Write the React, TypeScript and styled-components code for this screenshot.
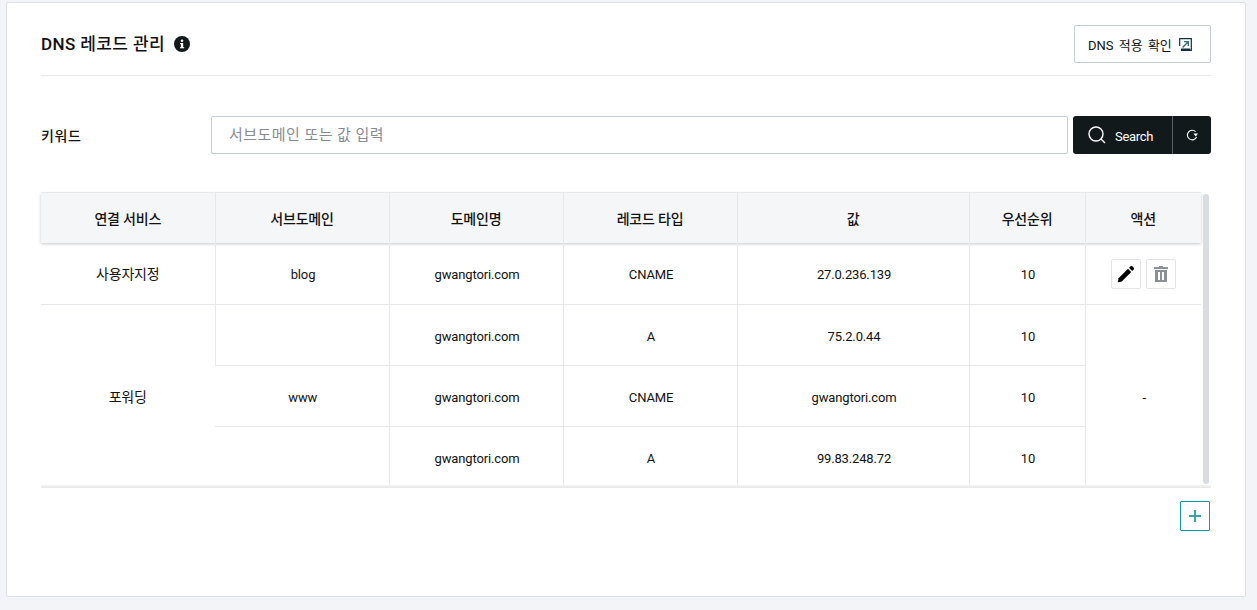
import React from "react";
import styled, { createGlobalStyle } from "styled-components";

const Global = createGlobalStyle`
  html, body { margin: 0; padding: 0; height: 100%; background: #f3f4f8; }
  body { font-family: Roboto, "Noto Sans CJK KR", sans-serif; color: #111; }
  * { box-sizing: border-box; }
`;

const Page = styled.div`
  width: 1257px;
  height: 610px;
  padding: 2px 11px 13px 6px;
`;

const Card = styled.section`
  height: 595px;
  width: 1240px;
  background: #fff;
  border: 1px solid #dde1e6;
  border-radius: 2px;
  padding: 22px 34px 0 34px;
`;

const Header = styled.header`
  height: 51px;
  border-bottom: 1px solid #e6e8eb;
  display: flex;
  justify-content: space-between;
  align-items: flex-start;
`;

const TitleWrap = styled.div`
  display: flex;
  align-items: center;
  gap: 9px;
  height: 38px;
`;

const Title = styled.h1`
  margin: 0;
  font-size: 17px;
  font-weight: 500;
  letter-spacing: 0.4px;
  color: #111;
  line-height: 38px;
`;

const OutlineButton = styled.button`
  width: 137px;
  height: 38px;
  background: #fff;
  border: 1px solid #c4ccd6;
  border-radius: 2px;
  display: flex;
  align-items: center;
  gap: 7px;
  font: inherit;
  font-size: 13px;
  word-spacing: 2px;
  color: #111;
  padding: 0 0 0 13px;
`;

const SearchRow = styled.form`
  margin-top: 40px;
  display: flex;
  align-items: center;
  height: 38px;
`;

const Label = styled.label`
  width: 170px;
  font-size: 14px;
  font-weight: 500;
  letter-spacing: 0.6px;
  color: #111;
`;

const Input = styled.input`
  width: 857px;
  height: 38px;
  border: 1px solid #c4ccd6;
  border-radius: 2px;
  padding: 0 17px;
  font: inherit;
  font-size: 15px;
  letter-spacing: 0.45px;
  &::placeholder { color: #868b92; opacity: 1; }
`;

const SearchGroup = styled.div`
  margin-left: 5px;
  width: 138px;
  height: 38px;
  display: flex;
  background: #12191b;
  border-radius: 3px;
`;

const SearchButton = styled.button`
  width: 100px;
  border: 0;
  border-right: 1px solid #5a6066;
  background: transparent;
  color: #fff;
  display: flex;
  align-items: center;
  gap: 9px;
  padding: 0 0 0 15px;
  font: inherit;
  font-size: 13px;
  letter-spacing: -0.3px;
`;

const SearchLabel = styled.span`
  padding-top: 2px;
`;

const ResetButton = styled.button`
  flex: 1;
  border: 0;
  background: transparent;
  color: #fff;
  display: flex;
  align-items: center;
  justify-content: center;
  padding: 0;
`;

const TableWrap = styled.div`
  position: relative;
  margin-top: 38px;
  height: 296px;
  width: 1170px;
`;

const Table = styled.table`
  border-collapse: collapse;
  table-layout: fixed;
  width: 1160px;
  font-size: 13px;
  color: #111;
`;

const HeadRow = styled.tr`
  height: 50px;
  background: #f5f6f8;
  box-shadow: 0 1px 3px rgba(0, 0, 0, 0.22);
`;

const Th = styled.th`
  font-weight: 500;
  font-size: 14px;
  letter-spacing: -0.2px;
  border-top: 1px solid #e6e8eb;
  border-left: 1px solid #e6e8eb;
  padding: 0;
  &:first-child { border-left: 0; }
`;

const Row = styled.tr<{ $first?: boolean }>`
  height: ${(p) => (p.$first ? "62px" : "61px")};
`;

const Td = styled.td<{ $korean?: boolean }>`
  text-align: center;
  padding: ${(p) => (p.$korean ? "0" : "2px 0 0 2px")};
  font-size: ${(p) => (p.$korean ? "14px" : "13px")};
  letter-spacing: -0.15px;
  border-left: 1px solid #e6e8eb;
  border-bottom: 1px solid #e6e8eb;
  &:first-child { border-left: 0; }
`;

const BottomEdge = styled.div`
  position: absolute;
  left: 0;
  top: 293px;
  width: 1170px;
  height: 3px;
  background: linear-gradient(#f6f6f6, #e6e6e6);
`;

const ScrollThumb = styled.div`
  position: absolute;
  left: 1162px;
  top: 2px;
  width: 6px;
  height: 290px;
  border-radius: 3px;
  background: #d9dde1;
`;

const ActionWrap = styled.div`
  display: flex;
  justify-content: center;
  gap: 5px;
  margin-left: -2px;
`;

const IconButton = styled.button`
  width: 30px;
  height: 30px;
  border: 1px solid #e2e4e7;
  border-radius: 2px;
  background: #fff;
  padding: 0;
  display: flex;
  align-items: center;
  justify-content: center;
`;

const Footer = styled.div`
  margin-top: 13px;
  display: flex;
  justify-content: flex-end;
  width: 1169px;
`;

const AddButton = styled.button`
  width: 30px;
  height: 30px;
  border: 1px solid #12979e;
  border-radius: 1px;
  background: #fff;
  padding: 0;
  display: flex;
  align-items: center;
  justify-content: center;
`;

const cols = [174, 174, 174, 174, 232, 116, 116];
const heads = ["연결 서비스", "서브도메인", "도메인명", "레코드 타입", "값", "우선순위", "액션"];

export default function App() {
  return (
    <Page>
      <Global />
      <Card>
        <Header>
          <TitleWrap>
            <Title>DNS 레코드 관리</Title>
            <svg width="16" height="16" viewBox="0 0 16 16">
              <circle cx="8" cy="8" r="8" fill="#12191b" />
              <rect x="6.9" y="7" width="2.3" height="5" fill="#fff" />
              <rect x="6" y="7" width="3" height="1.1" fill="#fff" />
              <rect x="6" y="11.2" width="4.2" height="1.1" fill="#fff" />
              <circle cx="8" cy="4.7" r="1.3" fill="#fff" />
            </svg>
          </TitleWrap>
          <OutlineButton type="button">
            DNS 적용 확인
            <svg width="13" height="13" viewBox="0 0 13 13" fill="none" stroke="#12303a" strokeWidth="1.2">
              <path d="M0.7 8V0.7H12.3V12.3H2.5V11.2H11.2" />
              <path d="M3.6 9.4L9 4M5 3.6H9.4V8" stroke="#3b6a78" strokeWidth="1.4" />
            </svg>
          </OutlineButton>
        </Header>
        <SearchRow>
          <Label>키워드</Label>
          <Input placeholder="서브도메인 또는 값 입력" />
          <SearchGroup>
            <SearchButton type="button">
              <svg width="18" height="18" viewBox="0 0 18 18" fill="none" stroke="#fff" strokeWidth="1.4">
                <circle cx="8" cy="8" r="7" />
                <path d="M13 13L17 17" />
              </svg>
              <SearchLabel>Search</SearchLabel>
            </SearchButton>
            <ResetButton type="button">
              <svg width="12" height="12" viewBox="0 0 12 12" fill="none">
                <path d="M9.6 2.6A4.8 4.8 0 1 0 10.6 8" stroke="#fff" strokeWidth="1.1" />
                <path d="M7.4 4.4H12L9.8 7.4Z" fill="#fff" />
              </svg>
            </ResetButton>
          </SearchGroup>
        </SearchRow>
        <TableWrap>
          <Table>
            <colgroup>
              {cols.map((w, i) => (
                <col key={i} style={{ width: w }} />
              ))}
            </colgroup>
            <thead>
              <HeadRow>
                {heads.map((h) => (
                  <Th key={h}>{h}</Th>
                ))}
              </HeadRow>
            </thead>
            <tbody>
              <Row $first>
                <Td $korean>사용자지정</Td>
                <Td>blog</Td>
                <Td>gwangtori.com</Td>
                <Td>CNAME</Td>
                <Td>27.0.236.139</Td>
                <Td>10</Td>
                <Td>
                  <ActionWrap>
                    <IconButton type="button" aria-label="edit">
                      <svg width="18" height="18" viewBox="0 0 18 18" fill="#000">
                        <path d="M0.8 17.2L1.6 13.2L11 3.8L14.2 7L4.8 16.4Z" />
                        <path d="M12 2.8L13.6 1.2a1.2 1.2 0 0 1 1.7 0L16.8 2.7a1.2 1.2 0 0 1 0 1.7L15.2 6Z" />
                      </svg>
                    </IconButton>
                    <IconButton type="button" aria-label="delete">
                      <svg width="14" height="16" viewBox="0 0 14 16">
                        <path fill="#8b9096" fillRule="evenodd" d="M5 0h4v1h5v2H0V1h5zM1 4h12v12H1zM4 6v8h2V6zM8 6v8h2V6z" />
                      </svg>
                    </IconButton>
                  </ActionWrap>
                </Td>
              </Row>
              <Row>
                <Td $korean rowSpan={3}>포워딩</Td>
                <Td></Td>
                <Td>gwangtori.com</Td>
                <Td>A</Td>
                <Td>75.2.0.44</Td>
                <Td>10</Td>
                <Td rowSpan={3}>-</Td>
              </Row>
              <Row>
                <Td>www</Td>
                <Td>gwangtori.com</Td>
                <Td>CNAME</Td>
                <Td>gwangtori.com</Td>
                <Td>10</Td>
              </Row>
              <Row>
                <Td></Td>
                <Td>gwangtori.com</Td>
                <Td>A</Td>
                <Td>99.83.248.72</Td>
                <Td>10</Td>
              </Row>
            </tbody>
          </Table>
          <BottomEdge />
          <ScrollThumb />
        </TableWrap>
        <Footer>
          <AddButton type="button" aria-label="add">
            <svg width="14" height="14" viewBox="0 0 14 14" stroke="#35a5aa" strokeWidth="2">
              <path d="M7 1V13M1 7H13" />
            </svg>
          </AddButton>
        </Footer>
      </Card>
    </Page>
  );
}
